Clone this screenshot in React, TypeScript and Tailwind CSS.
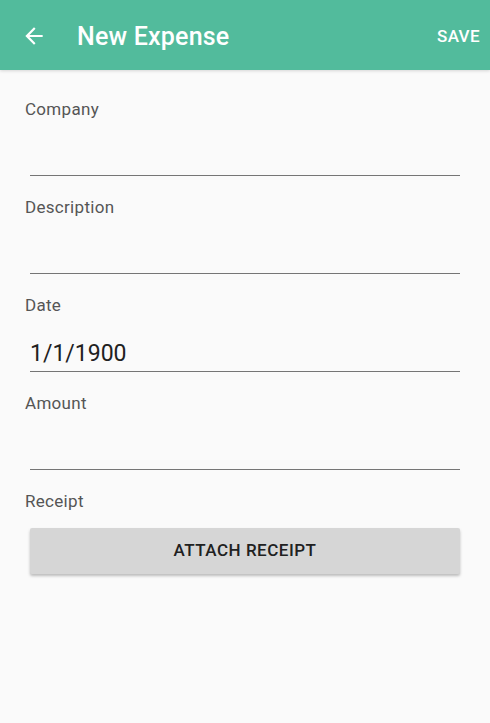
const fields = [
  { label: "Company", value: "" },
  { label: "Description", value: "" },
  { label: "Date", value: "1/1/1900" },
  { label: "Amount", value: "" },
];

export default function App() {
  return (
    <div className="min-h-[723px] bg-[#fafafa] font-['Roboto','Liberation_Sans',sans-serif]">
      <header className="h-[70px] bg-[#52bb9c] flex items-center pl-[21px] pr-[10px] shadow-[0_1px_3px_rgba(0,0,0,0.15)]">
        <svg width="26" height="26" viewBox="0 0 24 24" className="fill-white mt-[1px]">
          <path d="M20 11H7.83l5.59-5.59L12 4l-8 8 8 8 1.41-1.41L7.83 13H20v-2z" />
        </svg>
        <h1 className="ml-[30px] mt-[2px] text-white text-[25px] tracking-[0.2px] font-medium leading-none">New Expense</h1>
        <button className="ml-auto mt-[2px] text-white text-[17px] tracking-[0.4px] font-medium leading-none">SAVE</button>
      </header>
      <main className="pt-[29px] flex flex-col">
        {fields.map((f) => (
          <div key={f.label} className="mb-[21px]">
            <div className="pl-[25px] text-[17px] tracking-[0.3px] leading-[21px] text-[#555555]">{f.label}</div>
            <div className="ml-[30px] w-[430px] h-[56px] border-b border-[#757575] flex items-end pb-[4px]">
              <span className="text-[23px] leading-[26px] text-[#212121]">{f.value}</span>
            </div>
          </div>
        ))}
        <div className="pl-[25px] text-[17px] tracking-[0.3px] leading-[21px] text-[#555555]">Receipt</div>
        <button className="mt-[16px] ml-[30px] w-[430px] h-[46px] bg-[#d6d6d6] rounded-[2px] shadow-[0_2px_3px_rgba(0,0,0,0.25)] text-[17px] tracking-[0.5px] font-medium text-[#212121]">
          ATTACH RECEIPT
        </button>
      </main>
    </div>
  );
}
